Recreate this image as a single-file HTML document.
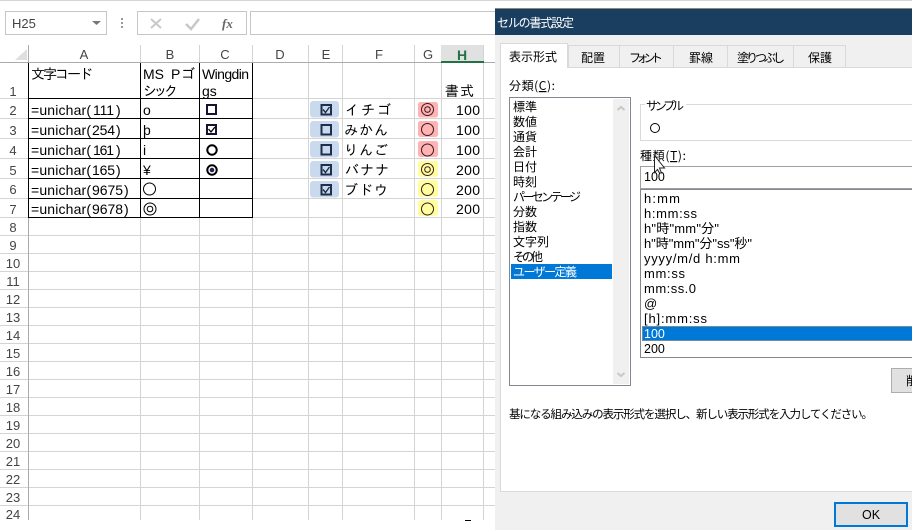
<!DOCTYPE html>
<html><head><meta charset="utf-8">
<style>
html,body{margin:0;padding:0;background:#fff;width:912px;height:530px;overflow:hidden}
svg{display:block}
.c{font:14px "Liberation Sans","IPAGothic",sans-serif;fill:#000}
.h{font:13px "Liberation Sans",sans-serif;fill:#444;text-anchor:middle}
.d{font:13px "Liberation Sans","Noto Sans CJK JP",sans-serif;fill:#000}
.n{font-size:12.500px}
.j{font:12px "Noto Sans CJK JP",sans-serif;fill:#000}
.g{fill:#d4d4d4}.k{fill:#000}
</style></head><body>
<svg width="912" height="530" viewBox="0 0 912 530" xmlns="http://www.w3.org/2000/svg">
<rect width="912" height="530" fill="#fff"/>
<rect width="912" height="1" fill="#d4d4d4"/>
<!-- formula bar -->
<rect x="5.500" y="11.500" width="101" height="23" fill="#fff" stroke="#c6c6c6"/>
<text x="12" y="28" font-family="Liberation Sans" font-size="13" fill="#444">H25</text>
<path d="M92 21h9l-4.500 4z" fill="#777"/>
<rect x="121" y="18" width="2" height="2" fill="#999"/><rect x="121" y="22" width="2" height="2" fill="#999"/><rect x="121" y="26" width="2" height="2" fill="#999"/>
<rect x="137.500" y="11.500" width="109" height="23" fill="#fff" stroke="#c6c6c6"/>
<path d="M151 19l10 9M161 19l-10 9" stroke="#c8c8c8" stroke-width="2" fill="none"/>
<path d="M186 24l5 5 8-10" stroke="#c8c8c8" stroke-width="2.500" fill="none"/>
<text x="222" y="28" font-family="Liberation Serif" font-style="italic" font-weight="bold" font-size="13" fill="#666">fx</text>
<rect x="250.500" y="11.500" width="246" height="23" fill="#fff" stroke="#c6c6c6"/>
<!-- grid -->
<g class="g">
<rect x="28" y="62" width="467" height="1"/>
<rect x="140" y="45" width="1" height="475"/><rect x="199" y="45" width="1" height="475"/><rect x="252" y="45" width="1" height="475"/><rect x="308" y="45" width="1" height="475"/><rect x="342" y="45" width="1" height="475"/><rect x="414" y="45" width="1" height="475"/><rect x="441" y="45" width="1" height="475"/><rect x="483" y="45" width="1" height="475"/>
<rect x="0" y="98" width="495" height="1"/><rect x="0" y="118" width="495" height="1"/><rect x="0" y="138" width="495" height="1"/><rect x="0" y="158" width="495" height="1"/><rect x="0" y="178" width="495" height="1"/><rect x="0" y="198" width="495" height="1"/><rect x="0" y="217" width="495" height="1"/>
<rect x="0" y="235" width="495" height="1"/><rect x="0" y="253" width="495" height="1"/><rect x="0" y="271" width="495" height="1"/><rect x="0" y="289" width="495" height="1"/><rect x="0" y="307" width="495" height="1"/><rect x="0" y="325" width="495" height="1"/><rect x="0" y="343" width="495" height="1"/><rect x="0" y="361" width="495" height="1"/><rect x="0" y="379" width="495" height="1"/><rect x="0" y="397" width="495" height="1"/><rect x="0" y="415" width="495" height="1"/><rect x="0" y="433" width="495" height="1"/><rect x="0" y="451" width="495" height="1"/><rect x="0" y="469" width="495" height="1"/><rect x="0" y="487" width="495" height="1"/><rect x="0" y="505" width="495" height="1"/>
</g>
<rect x="0" y="62" width="495" height="1" fill="#ababab"/>
<rect x="28" y="45" width="1" height="475" fill="#ababab"/>
<path d="M27 49v11h-12z" fill="#dfdfdf"/>
<!-- H header -->
<rect x="441" y="45" width="42" height="17" fill="#e1e1e1"/>
<rect x="441" y="61" width="43" height="2" fill="#217346"/>
<g class="h">
<text x="84" y="59">A</text><text x="170" y="59">B</text><text x="225" y="59">C</text><text x="280" y="59">D</text><text x="326" y="59">E</text><text x="379" y="59">F</text><text x="428" y="59">G</text>
<text x="462" y="60" style="fill:#217346;font-weight:bold;font-size:14px">H</text>
<text x="13" y="96">1</text><text x="13" y="115">2</text><text x="13" y="135">3</text><text x="13" y="155">4</text><text x="13" y="175">5</text><text x="13" y="194">6</text><text x="13" y="214">7</text><text x="13" y="232">8</text><text x="13" y="250">9</text><text x="13" y="268">10</text><text x="13" y="286">11</text><text x="13" y="304">12</text><text x="13" y="322">13</text><text x="13" y="340">14</text><text x="13" y="358">15</text><text x="13" y="376">16</text><text x="13" y="394">17</text><text x="13" y="412">18</text><text x="13" y="430">19</text><text x="13" y="448">20</text><text x="13" y="466">21</text><text x="13" y="484">22</text><text x="13" y="502">23</text><text x="13" y="519">24</text>
</g>
<!-- table borders -->
<g class="k">
<rect x="28" y="98" width="225" height="1"/><rect x="28" y="118" width="225" height="1"/><rect x="28" y="138" width="225" height="1"/><rect x="28" y="158" width="225" height="1"/><rect x="28" y="178" width="225" height="1"/><rect x="28" y="198" width="225" height="1"/><rect x="28" y="217" width="225" height="1"/>
<rect x="28" y="63" width="1" height="155"/><rect x="140" y="63" width="1" height="155"/><rect x="199" y="63" width="1" height="155"/><rect x="252" y="63" width="1" height="155"/>
</g>
<!-- table text -->
<g class="c">
<text x="31" y="79" textLength="62">文字コード</text>
<text x="143" y="79">MS</text><text x="171" y="79">P</text><text x="181" y="79">ゴ</text>
<text x="143" y="96" textLength="35">シック</text>
<text x="202" y="79" textLength="47">Wingdin</text>
<text x="202" y="96">gs</text>
<text x="31" y="115" textLength="60">=unichar(</text><text x="93" y="115" textLength="21">111</text><text x="116" y="115">)</text>
<text x="31" y="135" textLength="60">=unichar(</text><text x="92" y="135" textLength="23">254</text><text x="116" y="135">)</text>
<text x="31" y="155" textLength="60">=unichar(</text><text x="93" y="155" textLength="21">161</text><text x="116" y="155">)</text>
<text x="31" y="175" textLength="60">=unichar(</text><text x="92" y="175" textLength="23">165</text><text x="116" y="175">)</text>
<text x="31" y="195" textLength="60">=unichar(</text><text x="92" y="195" textLength="31">9675</text><text x="124" y="195">)</text>
<text x="31" y="214" textLength="60">=unichar(</text><text x="92" y="214" textLength="31">9678</text><text x="124" y="214">)</text>
<text x="143" y="115">o</text><text x="143" y="135">þ</text><text x="143" y="155">i</text><text x="143" y="175">¥</text>
<text x="345" y="115" textLength="46">イチゴ</text>
<text x="344" y="135" textLength="44">みかん</text>
<text x="344" y="155" textLength="44">りんご</text>
<text x="345" y="175" textLength="44">バナナ</text>
<text x="344" y="195" textLength="44">ブドウ</text>
<text x="445" y="96" textLength="29">書式</text>
<text x="456" y="115" textLength="24">100</text><text x="456" y="135" textLength="24">100</text><text x="456" y="155" textLength="24">100</text>
<text x="456" y="175" textLength="24">200</text><text x="456" y="195" textLength="24">200</text><text x="456" y="214" textLength="24">200</text>
</g>
<g fill="none" stroke="#000">
<circle cx="149.500" cy="189" r="6"/>
<circle cx="150" cy="209" r="6"/><circle cx="150" cy="209" r="2.800"/>
</g>
<!-- wingdings icons -->
<g fill="none" stroke="#000" stroke-width="2">
<rect x="207" y="105" width="9" height="9" stroke="#1a1030"/>
<rect x="207" y="125" width="9" height="9" stroke="#1a1030"/>
<path d="M208.500 129l2.500 3 4-5" stroke-width="1.300"/>
<circle cx="212" cy="150" r="4.700"/>
<circle cx="212" cy="170" r="4.700"/>
<circle cx="212" cy="170" r="2.300" fill="#225" stroke="none"/>
</g>
<!-- E column chips -->
<g fill="#c9daee">
<rect x="310" y="101" width="29" height="16.500" rx="3"/><rect x="310" y="121" width="29" height="16.500" rx="3"/><rect x="310" y="141" width="29" height="16.500" rx="3"/><rect x="310" y="161" width="29" height="16.500" rx="3"/><rect x="310" y="181" width="29" height="16.500" rx="3"/>
</g>
<g fill="none" stroke="#1f2f4a" stroke-width="2">
<rect x="321.500" y="105" width="9.500" height="9.500"/><rect x="321.500" y="125" width="9.500" height="9.500"/><rect x="321.500" y="145" width="9.500" height="9.500"/><rect x="321.500" y="165" width="9.500" height="9.500"/><rect x="321.500" y="185" width="9.500" height="9.500"/>
<path d="M323 109.500l2.500 3 4-5.500M323 169.500l2.500 3 4-5.500M323 189.500l2.500 3 4-5.500" stroke-width="1.400"/>
</g>
<!-- G column chips -->
<rect x="418" y="102" width="20" height="15.500" rx="2.500" fill="#ffb3b3"/><rect x="418" y="121" width="20" height="16" rx="2.500" fill="#ffb3b3"/><rect x="418" y="141" width="20" height="16" rx="2.500" fill="#ffb3b3"/>
<rect x="418" y="161" width="20" height="16" rx="2.500" fill="#ffff9f"/><rect x="418" y="180" width="20" height="17" rx="2.500" fill="#ffff9f"/><rect x="418" y="200" width="20" height="16" rx="2.500" fill="#ffff9f"/>
<g fill="none" stroke="#3a1a20">
<circle cx="427.500" cy="109.500" r="6"/><circle cx="427.500" cy="109.500" r="2.800"/>
<circle cx="427.500" cy="129.500" r="6"/><circle cx="427.500" cy="150" r="6"/>
<circle cx="427.500" cy="169.500" r="6"/><circle cx="427.500" cy="169.500" r="2.800"/>
<circle cx="427.500" cy="189.500" r="6"/><circle cx="427.500" cy="209" r="6"/>
</g>
<rect x="465" y="520" width="6" height="1" fill="#000"/>
<!-- dialog -->
<rect x="495" y="8" width="417" height="1" fill="#888"/>
<rect x="495" y="9" width="417" height="521" fill="#f0f0f0"/>
<rect x="495" y="9" width="417" height="26" fill="#1a3e5f"/>
<text x="497" y="27" font-family="Noto Sans CJK JP" font-size="12" fill="#fff" textLength="77">セルの書式設定</text>
<!-- panel -->
<rect x="500.500" y="67.500" width="420" height="424" fill="#fff" stroke="#d9d9d9"/>
<!-- tabs -->
<g fill="#f0f0f0" stroke="#d9d9d9">
<rect x="568.500" y="45.500" width="51" height="22"/><rect x="619.500" y="45.500" width="54" height="22"/><rect x="673.500" y="45.500" width="54" height="22"/><rect x="727.500" y="45.500" width="66" height="22"/><rect x="793.500" y="45.500" width="52" height="22"/>
</g>
<path d="M500.500 68V43.500h67V68" fill="#fff" stroke="#d9d9d9"/>
<rect x="501" y="66" width="66" height="3" fill="#fff"/>
<g class="j">
<text x="509" y="61">表示形式</text>
<text x="581" y="62">配置</text><text x="629" y="62" textLength="34">フォント</text><text x="689" y="62">罫線</text><text x="737" y="62" textLength="48">塗りつぶし</text><text x="808" y="62">保護</text>
<text x="509" y="90" textLength="46">分類(<tspan text-decoration="underline">C</tspan>):</text>
<text x="640" y="160" textLength="46">種類(<tspan text-decoration="underline">T</tspan>):</text>
<text x="509" y="418" font-size="11.500" textLength="364">基になる組み込みの表示形式を選択し、新しい表示形式を入力してください。</text>
</g>
<!-- category list -->
<rect x="509.500" y="97.500" width="121" height="288" fill="#fff" stroke="#828790"/>
<rect x="613" y="99" width="16" height="285" fill="#f0f0f0"/>
<path d="M617.500 110l3.500-3 3.500 3" stroke="#c8c8c8" stroke-width="2" fill="none"/>
<path d="M617.500 373l3.500 3 3.500-3" stroke="#c8c8c8" stroke-width="2" fill="none"/>
<rect x="511" y="264" width="101" height="15" fill="#0078d7"/>
<g class="j">
<text x="513" y="111">標準</text><text x="513" y="126">数値</text><text x="513" y="141">通貨</text><text x="513" y="156">会計</text><text x="513" y="171">日付</text><text x="513" y="186">時刻</text><text x="513" y="201" textLength="68">パーセンテージ</text><text x="513" y="216">分数</text><text x="513" y="231">指数</text><text x="513" y="246">文字列</text><text x="513" y="261" textLength="30">その他</text>
<text x="513" y="276" style="fill:#fff" textLength="64">ユーザー定義</text>
</g>
<!-- sample group -->
<rect x="640.500" y="104.500" width="290" height="36" fill="none" stroke="#d9d9d9"/>
<rect x="645" y="100" width="41" height="10" fill="#fff"/>
<text x="646" y="110" class="j" textLength="38">サンプル</text>
<circle cx="655" cy="128" r="4.500" fill="none" stroke="#000"/>
<!-- type input -->
<rect x="640.500" y="166.500" width="290" height="22" fill="#fff" stroke="#a0a0a0"/>
<text x="644" y="181" class="d n">100</text>
<!-- format list -->
<rect x="640.500" y="189.500" width="290" height="168" fill="#fff" stroke="#828790"/>
<rect x="642" y="326" width="270" height="15" fill="#0078d7"/>
<rect x="642.500" y="326.500" width="280" height="14" fill="none" stroke="#e8a050" stroke-dasharray="1 1"/>
<g class="d">
<text x="644" y="203" textLength="36">h:mm</text>
<text x="644" y="218" textLength="53">h:mm:ss</text>
<text x="644" y="233" textLength="75">h"時"mm"分"</text>
<text x="644" y="248" textLength="108">h"時"mm"分"ss"秒"</text>
<text x="644" y="263" textLength="96">yyyy/m/d h:mm</text>
<text x="644" y="278" textLength="41">mm:ss</text>
<text x="644" y="293" textLength="52">mm:ss.0</text>
<text x="644" y="308">@</text>
<text x="644" y="323" textLength="63">[h]:mm:ss</text>
<text x="644" y="338" class="n" style="fill:#fff">100</text>
<text x="644" y="353" class="n">200</text>
</g>
<!-- delete button -->
<rect x="891.500" y="368.500" width="40" height="24" fill="#e1e1e1" stroke="#adadad"/>
<text x="906" y="385" class="j">削除</text>
<!-- cursor -->
<path d="M654.500 155.500v17l3-3 2 3.500h2l-2-5h5z" fill="#fff" stroke="#222" stroke-width="1"/>
<!-- OK -->
<rect x="835" y="503" width="72" height="23" fill="#e1e1e1" stroke="#0078d7" stroke-width="2"/>
<text x="871" y="519" text-anchor="middle" font-family="Liberation Sans" font-size="12.500" fill="#000">OK</text>
</svg>
</body></html>
